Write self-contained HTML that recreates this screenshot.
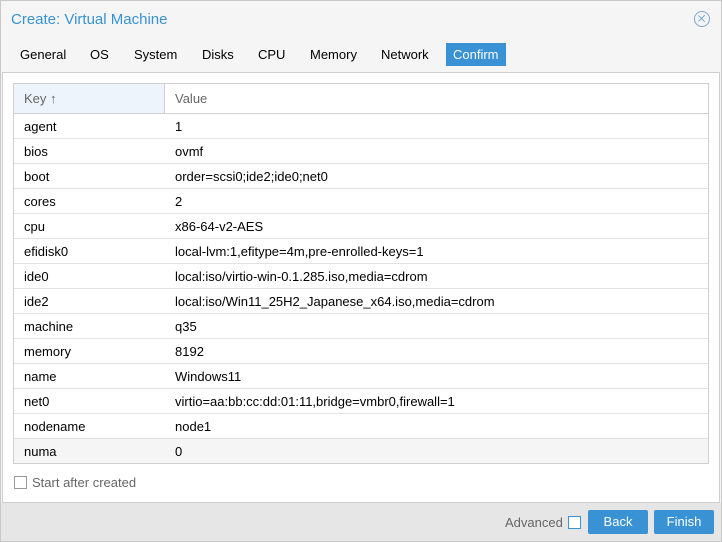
<!DOCTYPE html>
<html><head><style>
*{box-sizing:border-box;margin:0;padding:0}
body{width:722px;height:542px;background:#f5f5f5;font-family:"Liberation Sans",sans-serif;font-size:13px;color:#000;position:relative;overflow:hidden}
.frame{position:absolute;left:0;top:0;width:722px;height:542px;border:1px solid #c8c8c8;pointer-events:none;z-index:5}
.title{position:absolute;left:11px;top:11px;font-size:15px;color:#3892d4}
.close{position:absolute;left:694px;top:11px;width:16px;height:16px;border:1.5px solid #7aa6d6;border-radius:50%}
.close:before,.close:after{content:"";position:absolute;left:6px;top:2px;width:1.3px;height:9px;background:#7aa6d6;transform:rotate(45deg)}
.close:after{transform:rotate(-45deg)}
.tabs{position:absolute;top:43px;left:10px;height:23px}
.tab{position:absolute;top:0;height:23px;line-height:23px;padding:0 10px;font-size:13px}
.tab.on{background:#3892d4;color:#fff}
.panel{position:absolute;left:2px;top:72px;width:718px;height:431px;background:#fff;border:1px solid #cfcfcf}
.grid{position:absolute;left:10px;top:10px;width:696px;height:381px;border:1px solid #cfcfcf;overflow:hidden}
.hd{height:30px;border-bottom:1px solid #cfcfcf;display:flex;color:#666}
.hd div{line-height:29px;padding-left:10px}
.hd .k{width:151px;background:#edf4fb;border-right:1px solid #cfcfcf}
.row{height:25px;border-bottom:1px solid #e2e2e2;display:flex;line-height:26px}
.row .k{width:151px;padding-left:10px}
.row .v{padding-left:10px}
.cb{position:absolute;left:11px;top:402px;color:#666;font-size:13px}
.cb i{display:inline-block;width:13px;height:13px;border:1px solid #999;vertical-align:-2px;margin-right:5px;background:#fff}
.foot{position:absolute;left:0;top:503px;width:722px;height:39px;background:#e6e6e6}
.btn{position:absolute;top:7px;height:24px;line-height:24px;background:#3892d4;color:#fff;text-align:center;border-radius:2px;font-size:13px}
</style></head><body>
<div class="frame"></div>
<div class="title">Create: Virtual Machine</div>
<div class="close"></div>
<div class="tabs">
<div class="tab" style="left:0">General</div>
<div class="tab" style="left:70px">OS</div>
<div class="tab" style="left:114px">System</div>
<div class="tab" style="left:182px">Disks</div>
<div class="tab" style="left:238px">CPU</div>
<div class="tab" style="left:290px">Memory</div>
<div class="tab" style="left:361px">Network</div>
<div class="tab on" style="left:436px;width:60px;padding:0 7px">Confirm</div>
</div>
<div class="panel">
<div class="grid">
<div class="hd"><div class="k">Key ↑</div><div>Value</div></div>
<div class="row"><div class="k">agent</div><div class="v">1</div></div>
<div class="row"><div class="k">bios</div><div class="v">ovmf</div></div>
<div class="row"><div class="k">boot</div><div class="v">order=scsi0;ide2;ide0;net0</div></div>
<div class="row"><div class="k">cores</div><div class="v">2</div></div>
<div class="row"><div class="k">cpu</div><div class="v">x86-64-v2-AES</div></div>
<div class="row"><div class="k">efidisk0</div><div class="v">local-lvm:1,efitype=4m,pre-enrolled-keys=1</div></div>
<div class="row"><div class="k">ide0</div><div class="v">local:iso/virtio-win-0.1.285.iso,media=cdrom</div></div>
<div class="row"><div class="k">ide2</div><div class="v">local:iso/Win11_25H2_Japanese_x64.iso,media=cdrom</div></div>
<div class="row"><div class="k">machine</div><div class="v">q35</div></div>
<div class="row"><div class="k">memory</div><div class="v">8192</div></div>
<div class="row"><div class="k">name</div><div class="v">Windows11</div></div>
<div class="row"><div class="k">net0</div><div class="v">virtio=aa:bb:cc:dd:01:11,bridge=vmbr0,firewall=1</div></div>
<div class="row"><div class="k">nodename</div><div class="v">node1</div></div>
<div class="row" style="background:#f5f5f5"><div class="k">numa</div><div class="v">0</div></div>
</div>
<div class="cb"><i></i>Start after created</div>
</div>
<div class="foot">
<span style="position:absolute;left:505px;top:12px;color:#666">Advanced</span>
<i style="position:absolute;left:568px;top:13px;width:13px;height:13px;border:1px solid #3892d4;background:#fff"></i>
<div class="btn" style="left:588px;width:60px">Back</div>
<div class="btn" style="left:654px;width:60px">Finish</div>
</div>
</body></html>
